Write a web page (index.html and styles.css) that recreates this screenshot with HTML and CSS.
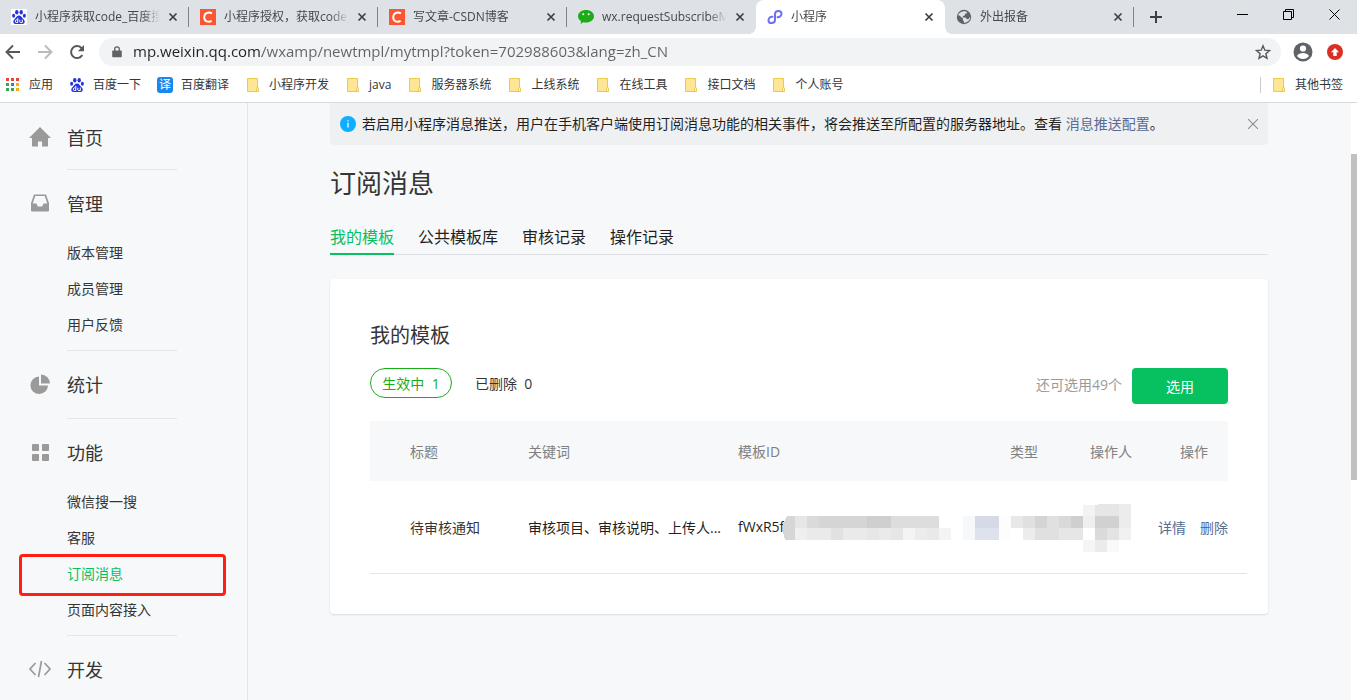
FILE: index.html
```html
<!DOCTYPE html>
<html lang="zh-CN">
<head>
<meta charset="utf-8">
<title>小程序</title>
<link rel="stylesheet" href="styles.css">
</head>
<body>
<svg class="defs" aria-hidden="true">
  <symbol id="x" viewBox="0 0 10 10"><path d="M1.500 1.500l7 7M8.500 1.500l-7 7" stroke="currentColor" stroke-width="1.700" fill="none"/></symbol>
  <symbol id="folder" viewBox="0 0 16 16"><path d="M2.500 1.500h10v9.500l.5 3.500H2.500z" fill="#ffe694" stroke="#ebc94c"/><path d="M11.500 11.500q0-1 1-1t1 1v3h-2z" fill="#fff0b8" stroke="#e8c03a" stroke-width=".8"/></symbol>
  <symbol id="paw" viewBox="0 0 16 16"><g fill="#2433dc"><ellipse cx="5.800" cy="3.200" rx="1.700" ry="2.300"/><ellipse cx="10.200" cy="3.200" rx="1.700" ry="2.300"/><ellipse cx="2.600" cy="6.800" rx="1.500" ry="2"/><ellipse cx="13.400" cy="6.800" rx="1.500" ry="2"/><path d="M8 6.500c2 0 2.700 1.700 3.800 3 1.500 1.500 2.200 2.400 1.800 4-.6 1.900-2.600 1.700-5.600 1.500-3 .2-5 .4-5.600-1.500-.4-1.600.3-2.500 1.800-4 1.100-1.300 1.800-3 3.800-3z"/></g><path d="M6.800 8.800v4.700H5.300q-1 0-1-1.300t1-1.300h1.500M8.800 10.700v2q0 .9 1 .9h1.500v-3" fill="none" stroke="#fff" stroke-width="1"/></symbol>
  <symbol id="csdn" viewBox="0 0 16 16"><path d="M0 0h16v16H0z" fill="#fc5531"/><path d="M12 4.300C8 2.300 4.200 4.300 4.200 8.200c0 4.200 4 5.400 7.500 3.700" fill="none" stroke="#fff" stroke-width="1.900"/></symbol>
</svg>

<header class="browser">
  <div class="strip">
    <div class="tab"><svg class="ico white"><use href="#paw"/></svg><span class="tab-title">小程序获取code_百度搜</span><button class="tab-x" aria-label="关闭"><svg><use href="#x"/></svg></button></div>
    <div class="tab"><svg class="ico"><use href="#csdn"/></svg><span class="tab-title">小程序授权，获取code_</span><button class="tab-x" aria-label="关闭"><svg><use href="#x"/></svg></button></div>
    <div class="tab"><svg class="ico"><use href="#csdn"/></svg><span class="tab-title">写文章-CSDN博客</span><button class="tab-x" aria-label="关闭"><svg><use href="#x"/></svg></button></div>
    <div class="tab no-sep"><svg class="ico" viewBox="0 0 16 16"><path d="M8 1c4.500 0 8 2.700 8 6.300s-3.500 6.300-8 6.300q-1.500 0-2.800-.4L2.700 15l.4-2.800C1.200 11 0 9.300 0 7.300 0 3.700 3.500 1 8 1z" fill="#1aad19"/><circle cx="5.300" cy="5.300" r="1" fill="#fff"/><circle cx="10.700" cy="5.300" r="1" fill="#fff"/></svg><span class="tab-title">wx.requestSubscribeM</span><button class="tab-x" aria-label="关闭"><svg><use href="#x"/></svg></button></div>
    <div class="tab active"><svg class="ico" viewBox="0 0 16 16"><path d="M5.500 7.700C3.300 7.500 1.500 9.200 1.500 11.200c0 1.700 1.300 2.900 3 2.900 2 0 3.500-1.300 3.500-3.300V5.200c0-2 1.600-3.300 3.500-3.300 1.700 0 3 1.200 3 2.800 0 2-1.800 3.600-4 3.500" fill="none" stroke="#6f70ee" stroke-width="2" stroke-linecap="round"/></svg><span class="tab-title">小程序</span><button class="tab-x" aria-label="关闭"><svg><use href="#x"/></svg></button></div>
    <div class="tab"><svg class="ico" viewBox="0 0 16 16"><circle cx="8" cy="8" r="7.200" fill="#5f6368"/><path d="M8.500 2.300L11 2.800l-.3 1.700-1.700.3-.2 1.700-2 .5v1.500h2.700l1.300 1.600 1.700.2.800-1.800 1 .1c-.3 2.800-3 5.300-6.300 5.300l-.3-1.700-1.700-1-.2-1.700-3.700-2.700C2.300 4.500 5 2.300 8.500 2.300z" fill="#dee1e6"/><path d="M2.200 6.500l4 3.300v1.500l1 1.700" fill="none" stroke="#5f6368" stroke-width="1.500"/></svg><span class="tab-title">外出报备</span><button class="tab-x" aria-label="关闭"><svg><use href="#x"/></svg></button></div>
    <button class="new-tab" aria-label="新标签页"><svg viewBox="0 0 12 12"><path d="M6 0v12M0 6h12" stroke="#3c4043" stroke-width="2"/></svg></button>
    <div class="win">
      <button aria-label="最小化"><svg viewBox="0 0 11 11"><path d="M0 5.500h11" stroke="#000" fill="none"/></svg></button>
      <button aria-label="还原"><svg viewBox="0 0 11 11"><path d="M.5 2.500h8v8h-8zM2.500 2.500v-2h8v8h-2" stroke="#000" fill="none"/></svg></button>
      <button aria-label="关闭窗口"><svg viewBox="0 0 11 11"><path d="M.5.5l10 10M10.500.5l-10 10" stroke="#000" fill="none"/></svg></button>
    </div>
  </div>

  <div class="toolbar">
    <button aria-label="后退"><svg viewBox="0 0 16 16"><path d="M15 8H2M8 1.500L1.500 8 8 14.500" fill="none" stroke="#55585c" stroke-width="1.900"/></svg></button>
    <button aria-label="前进"><svg viewBox="0 0 16 16"><path d="M1 8h13M8 1.500L14.500 8 8 14.500" fill="none" stroke="#b9bbbe" stroke-width="1.900"/></svg></button>
    <button aria-label="刷新"><svg viewBox="0 0 16 16"><path d="M13.300 11A6 6 0 1 1 12.200 3.700L14 5.500" fill="none" stroke="#55585c" stroke-width="2"/><path d="M15 1v6.200H8.800z" fill="#55585c"/></svg></button>
    <div class="omni">
      <svg class="lock" viewBox="0 0 10 12"><path d="M1 4.500h8q.8 0 .8.800v5.200q0 .8-.8.800H1q-.8 0-.8-.8V5.300q0-.8.8-.8z" fill="#5f6368"/><path d="M2.700 5V3.200a2.300 2.300 0 0 1 4.600 0V5" fill="none" stroke="#5f6368" stroke-width="1.300"/></svg>
      <input class="url" type="text" aria-label="地址栏" value="mp.weixin.qq.com/wxamp/newtmpl/mytmpl?token=702988603&amp;lang=zh_CN">
      <button aria-label="收藏"><svg viewBox="0 0 16 16"><path d="M8 1.800l1.800 4.400 4.700.4-3.600 3.100 1.100 4.600-4-2.500-4 2.500 1.100-4.600L1.500 6.600l4.700-.4z" fill="none" stroke="#55585c" stroke-width="1.400"/></svg></button>
    </div>
    <button class="avatar" aria-label="用户"><svg viewBox="0 0 20 20"><circle cx="10" cy="10" r="9.500" fill="#5f6368"/><circle cx="10" cy="6.500" r="3.100" fill="#fff"/><path d="M4 14c1.300-2.300 3.700-3 6-3s4.700.7 6 3c-1.500 2-3.500 3-6 3s-4.500-1-6-3z" fill="#fff"/></svg></button>
    <button class="update" aria-label="更新"><svg viewBox="0 0 16 16"><circle cx="8" cy="8" r="8" fill="#d93025"/><path d="M8 4l4 4.300H9.700V12H6.300V8.300H4z" fill="#fff"/></svg></button>
  </div>

  <nav class="bookmarks">
    <a href="#"><svg class="ico" viewBox="0 0 16 16"><path d="M1 1h3v3H1zM6 1h3v3H6zM11 1h3v3h-3z" fill="#ea4335"/><path d="M1 6h3v3H1zM1 11h3v3H1zM6 11h3v3H6z" fill="#34a853"/><path d="M6 6h3v3H6z" fill="#1a86f0"/><path d="M11 6h3v3h-3zM11 11h3v3h-3z" fill="#f6ae10"/></svg>应用</a>
    <a href="#"><svg class="ico"><use href="#paw"/></svg>百度一下</a>
    <a href="#"><span class="ico yi">译</span>百度翻译</a>
    <a href="#"><svg class="ico"><use href="#folder"/></svg>小程序开发</a>
    <a href="#"><svg class="ico"><use href="#folder"/></svg>java</a>
    <a href="#"><svg class="ico"><use href="#folder"/></svg>服务器系统</a>
    <a href="#"><svg class="ico"><use href="#folder"/></svg>上线系统</a>
    <a href="#"><svg class="ico"><use href="#folder"/></svg>在线工具</a>
    <a href="#"><svg class="ico"><use href="#folder"/></svg>接口文档</a>
    <a href="#"><svg class="ico"><use href="#folder"/></svg>个人账号</a>
    <a href="#" class="others"><svg class="ico"><use href="#folder"/></svg>其他书签</a>
  </nav>
</header>

<div class="page">
  <nav class="side">
    <section>
      <h2><svg viewBox="0 0 22 22"><path d="M11 1L0 12h3v8.500h6v-5h4v5h6V12h3z" fill="#9a9a9a"/></svg>首页</h2>
    </section>
    <section>
      <h2><svg viewBox="0 0 22 22"><path fill-rule="evenodd" d="M5 2.500h12l3 8.500v7.500q0 1-1 1H3q-1 0-1-1V11zM6.200 4L3.800 11.500h3.700l1.300 3h4.400l1.300-3h3.700L15.800 4z" fill="#9a9a9a"/></svg>管理</h2>
      <ul><li><a href="#">版本管理</a></li><li><a href="#">成员管理</a></li><li><a href="#">用户反馈</a></li></ul>
    </section>
    <section>
      <h2><svg viewBox="0 0 22 22"><path d="M10 3.500v9h9A8.800 8.800 0 1 1 10 3.500z" fill="#9a9a9a"/><path d="M12 1.500a9 9 0 0 1 9 9h-9z" fill="#9a9a9a"/></svg>统计</h2>
    </section>
    <section>
      <h2><svg viewBox="0 0 22 22"><g fill="#9a9a9a"><rect x="3" y="3" width="7" height="7" rx="1"/><rect x="13" y="3" width="7" height="7" rx="1"/><rect x="3" y="13" width="7" height="7" rx="1"/><rect x="13" y="13" width="7" height="7" rx="1"/></g></svg>功能</h2>
      <ul><li><a href="#">微信搜一搜</a></li><li><a href="#">客服</a></li><li class="current"><a href="#">订阅消息</a></li><li><a href="#">页面内容接入</a></li></ul>
    </section>
    <section>
      <h2><svg viewBox="0 0 22 22"><path d="M6.500 5L1 11l5.500 6M15.500 5l5.500 6-5.500 6M12.500 3l-3 16" fill="none" stroke="#9a9a9a" stroke-width="1.700"/></svg>开发</h2>
    </section>
  </nav>

  <main class="main">
    <div class="notice">
      <svg class="info" viewBox="0 0 16 16"><circle cx="8" cy="8" r="8" fill="#10aeff"/><path d="M8 6.800v4.700M8 4.300v1.300" stroke="#fff" stroke-width="1.200"/></svg>
      <p>若启用小程序消息推送，用户在手机客户端使用订阅消息功能的相关事件，将会推送至所配置的服务器地址。查看 <a href="#">消息推送配置</a>。</p>
      <button aria-label="关闭提示"><svg viewBox="0 0 10 10"><path d="M0 0l10 10M10 0L0 10" stroke="#8c8d8f" stroke-width="1.100"/></svg></button>
    </div>
    <h1>订阅消息</h1>
    <nav class="tabs"><a href="#" class="on">我的模板</a><a href="#">公共模板库</a><a href="#">审核记录</a><a href="#">操作记录</a></nav>

    <section class="card">
      <h3>我的模板</h3>
      <div class="filters">
        <button class="pill">生效中&nbsp; 1</button>
        <button class="plain">已删除&nbsp; 0</button>
        <span class="left-count">还可选用49个</span>
        <button class="primary">选用</button>
      </div>
      <table>
        <colgroup><col class="c1"><col class="c2"><col><col class="c4"><col class="c5"><col class="c6"><col class="c7"></colgroup>
        <thead><tr><th>标题</th><th>关键词</th><th>模板ID</th><th>类型</th><th>操作人</th><th>操作</th><td></td></tr></thead>
        <tbody><tr>
          <td>待审核通知</td>
          <td class="dark">审核项目、审核说明、上传人...</td>
          <td class="dark id">fWxR5f
            <svg class="mosaic" viewBox="0 0 348 48" shape-rendering="crispEdges">
              <path d="M4 12h8v24H2l-2-8v-8z" fill="#d6d6d6"/>
              <path d="M12 12h12v12H12z" fill="#e6e6e6"/><path d="M24 12h12v12H24z" fill="#dadada"/><path d="M36 12h48v12H36z" fill="#d5d5d5"/><path d="M84 12h24v12H84z" fill="#cfcfcf"/><path d="M108 12h48v12h-48z" fill="#ddd"/>
              <path d="M12 24h12v12H12z" fill="#efefef"/><path d="M24 24h84v12H24z" fill="#eaeaea"/><path d="M48 24h12v12H48z" fill="#e1e1e1"/><path d="M84 24h12v12H84zM108 24h12v12h-12z" fill="#e6e6e6"/><path d="M120 24h48v12h-48z" fill="#f4f4f4"/><path d="M132 24h12v12h-12z" fill="#ececec"/><path d="M144 24h12v12h-12z" fill="#e9e9e9"/>
              <path d="M180 12h12v24h-12z" fill="#f6f8fa"/><path d="M192 12h24v12h-24z" fill="#d5dae6"/><path d="M192 24h24v12h-24z" fill="#dde2ed"/><path d="M216 12h12v24h-12z" fill="#fdfdfd"/>
              <path d="M228 12h12v12h-12z" fill="#e8e8e8"/><path d="M240 12h12v12h-12zM264 12h12v12h-12z" fill="#e0e0e0"/><path d="M252 12h12v12h-12z" fill="#d4d4d4"/><path d="M276 12h12v12h-12z" fill="#d9d9d9"/><path d="M288 12h12v12h-12z" fill="#cfcfcf"/><path d="M300 12h12v12h-12z" fill="#efefef"/><path d="M312 12h24v12h-24z" fill="#d1d1d1"/><path d="M336 0h12v24h-12z" fill="#ececec"/>
              <path d="M240 24h12v12h-12z" fill="#ececec"/><path d="M252 24h24v12h-24z" fill="#e0e0e0"/><path d="M276 24h24v12h-24z" fill="#e6e6e6"/><path d="M312 24h12v12h-12z" fill="#dadada"/><path d="M324 24h12v12h-12z" fill="#e3e3e3"/><path d="M336 24h12v12h-12z" fill="#f1f1f1"/>
              <path d="M300 1h12v11h-12z" fill="#f3f3f3"/><path d="M312 1l5-1h19v12h-24z" fill="#e6e6e6"/><path d="M300 36h12v12h-12z" fill="#f5f5f5"/><path d="M312 36h12v12h-12z" fill="#ebebeb"/><path d="M324 36h12v12h-12z" fill="#f9f9f9"/>
            </svg>
          </td>
          <td></td><td></td>
          <td class="ops"><a href="#">详情</a><a href="#">删除</a></td>
          <td></td>
        </tr></tbody>
      </table>
    </section>
  </main>
  <div class="scroll"><div class="thumb"></div></div>
</div>
</body>
</html>
```
FILE: styles.css
```css
*, *::before, *::after { box-sizing: border-box; }
body {
  margin: 0;
  height: 100vh;
  display: flex;
  flex-direction: column;
  overflow: hidden;
  font-family: "Open Sans", "Noto Sans CJK SC", sans-serif;
  font-size: 14px;
  color: #353535;
  background: #f6f8f9;
}
h1, h2, h3, p, ul { margin: 0; padding: 0; font-weight: 400; }
ul { list-style: none; }
a { color: inherit; text-decoration: none; }
button { font: inherit; color: inherit; border: 0; background: none; padding: 0; display: flex; align-items: center; justify-content: center; }
svg { display: block; flex: none; }
.defs { display: none; }
.ico { width: 16px; height: 16px; flex: none; }

/* browser chrome */
.browser { flex: none; background: #fff; border-bottom: 1px solid #d8dadd; font-size: 12px; }
.strip { display: flex; height: 34px; background: #dee1e6; }
.tab { position: relative; flex: 0 1 189px; min-width: 0; display: flex; align-items: center; gap: 8px; padding: 0 11px; color: #45484c; }
.tab::after { content: ""; position: absolute; right: 0; top: 7px; height: 20px; width: 1px; background: #808388; }
.tab.active::after, .tab.no-sep::after { display: none; }
.tab.active { background: #fff; border-radius: 8px 8px 0 0; }
.tab.active::before { content: ""; position: absolute; left: -8px; right: -8px; bottom: 0; height: 8px; background: radial-gradient(circle at 0 0, transparent 8px, #fff 8px) left / 8px 8px no-repeat, radial-gradient(circle at 100% 0, transparent 8px, #fff 8px) right / 8px 8px no-repeat; }
.white { background: #fff; }
.tab-title { flex: 1; overflow: hidden; white-space: nowrap; line-height: 20px; mask-image: linear-gradient(to right, #000 85%, transparent); }
.tab-x { width: 10px; color: #3c4043; }
.tab-x svg { width: 10px; height: 10px; }
.new-tab { width: 44px; }
.new-tab svg { width: 12px; height: 12px; }
.win { display: flex; height: 28px; margin-left: auto; }
.win button { width: 46px; }
.win svg { width: 11px; height: 11px; }

.toolbar { display: flex; align-items: center; gap: 16px; height: 36px; padding: 0 14px 0 5px; }
.toolbar svg { width: 16px; height: 16px; }
.omni { flex: 1; display: flex; align-items: center; height: 28px; margin-left: -2px; margin-right: -4px; padding: 0 10px 0 13px; border-radius: 14px; background: #f1f3f4; }
.toolbar .lock { width: 10px; height: 12px; }
.url { flex: 1; border: 0; outline: 0; padding: 0 0 2px; margin: 0 11px; height: 24px; font: 15px "Open Sans", sans-serif; color: transparent; background: linear-gradient(to right, #202124 129px, #5f6368 129px); background-clip: text; }
.toolbar .avatar svg { width: 20px; height: 20px; }
.avatar { margin-right: -2px; }

.bookmarks { display: flex; align-items: center; gap: 16px; height: 32px; padding: 0 14px 2px 5px; color: #333639; line-height: 20px; white-space: nowrap; }
.bookmarks a { display: flex; align-items: center; gap: 8px; }
.yi { border-radius: 3px; background: #1a86f0; color: #fff; text-align: center; line-height: 16px; }
.others { margin-left: auto; border-left: 1px solid #c8cacd; padding-left: 10px; }
.bookmarks .others { line-height: 16px; }

/* page */
.page { flex: 1; min-height: 0; display: flex; }
.side { flex: none; width: 248px; border-right: 1px solid #e4e5e8; }
.side section:first-child { padding-top: 1px; }
.side section:nth-child(3) { padding-bottom: 2px; }
.side section:not(:last-child)::after { content: ""; display: block; height: 1px; margin: 0 70px 0 67px; background: #e4e5e7; }
.side section:nth-child(3)::after { position: relative; top: 2px; }
.side h2 { display: flex; align-items: center; gap: 16px; height: 65px; padding-left: 29px; font-size: 18px; }
.side h2 svg { width: 22px; height: 22px; }
.side li { position: relative; height: 36px; line-height: 36px; padding-left: 67px; }
.side ul { padding-bottom: 7px; }
.current { color: #07c160; }
.current::before { content: ""; position: absolute; left: 19px; right: 21px; top: -2px; height: 42px; border: 3px solid #ff1f14; border-radius: 4px; }

.main { flex: 1; min-width: 0; padding: 0 83px 0 82px; }
.notice { display: flex; align-items: center; gap: 6px; height: 42px; padding: 0 10px; border-radius: 0 0 4px 4px; background: #eff0f2; color: #1f1f1f; }
.info { width: 16px; height: 16px; }
.notice p { flex: 1; line-height: 24px; }
.notice a, .ops a { color: #576b95; }
.notice svg:not(.info) { width: 10px; height: 10px; }
h1 { margin-top: 20px; font-size: 26px; line-height: 36px; }
.tabs { display: flex; gap: 24px; margin-top: 20px; border-bottom: 1px solid #dfe0e3; color: #1f1f1f; font-size: 16px; }
.tabs a { height: 34px; line-height: 32px; margin-bottom: -1px; }
.tabs .on { color: #07c160; border-bottom: 2px solid #07c160; }

.card { margin-top: 24px; padding: 41px 40px 40px; border-radius: 4px; background: #fff; box-shadow: 0 1px 2px rgba(0, 0, 0, .12); }
h3 { font-size: 20px; line-height: 32px; }
.filters { display: flex; align-items: flex-start; margin-top: 16px; }
.pill { height: 30px; width: 82px; border: 1px solid #1aad19; border-radius: 15px; color: #1aad19; }
.plain { height: 30px; margin-left: 23px; }
.left-count { margin-left: auto; line-height: 34px; color: #9a9a9a; }
.primary { width: 96px; height: 36px; margin-left: 10px; border-radius: 4px; background: #07c160; color: #fff; }
table { width: calc(100% + 19px); margin-top: 17px; table-layout: fixed; border-collapse: collapse; white-space: nowrap; }
.c1 { width: 158px; } .c2 { width: 210px; } .c4 { width: 80px; } .c5 { width: 60px; } .c6 { width: 78px; } .c7 { width: 19px; }
th, td { padding: 0; text-align: left; font-weight: 400; }
th { height: 60px; background: #f6f8f9; color: #7e8081; }
th:first-child, td:first-child { padding-left: 40px; }
th:nth-child(6) { padding-right: 20px; text-align: right; }
tbody td { height: 92px; border-bottom: 1px solid #e4e5e7; }
.dark { color: #1f1f1f; }
.id { position: relative; }
.mosaic { position: absolute; left: 45px; top: 23px; width: 348px; height: 48px; }
.ops { text-align: right; }
.ops a + a { margin-left: 14px; }

.scroll { flex: none; width: 6px; padding-top: 51px; background: #fff; }
.thumb { height: 326px; background: #c1c1c1; }
```
